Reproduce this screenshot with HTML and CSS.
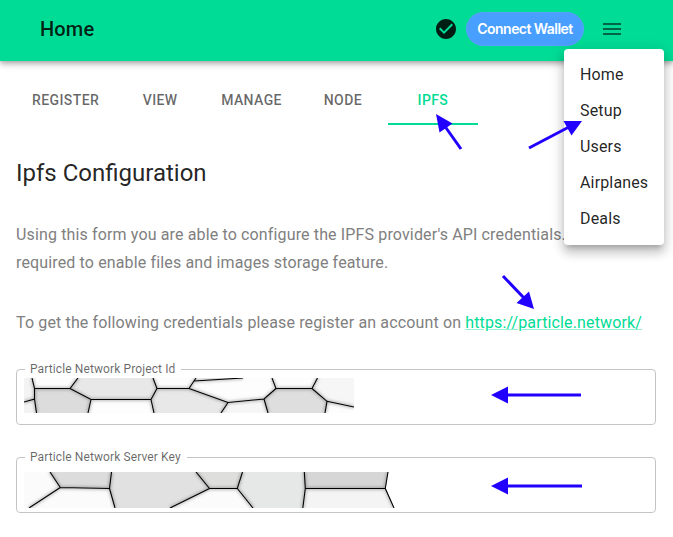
FILE: index.html
```html
<!DOCTYPE html>
<html lang="en">
<head>
<meta charset="utf-8">
<title>Ipfs Configuration</title>
<link rel="stylesheet" href="styles.css">
</head>
<body>
<header class="appbar">
  <h1 class="appbar-title">Home</h1>
  <svg class="icon check" viewBox="0 0 24 24"><path d="M12 2C6.480 2 2 6.480 2 12s4.480 10 10 10 10-4.480 10-10S17.520 2 12 2zm-2 15-5-5 1.410-1.410L10 14.170l7.590-7.590L19 8l-9 9z"/></svg>
  <button class="connect">Connect Wallet</button>
  <svg class="icon burger" viewBox="0 0 24 24"><path d="M3 18h18v-2H3v2zm0-5h18v-2H3v2zm0-7v2h18V6H3z"/></svg>
</header>
<nav class="menu">
  <a>Home</a><a>Setup</a><a>Users</a><a>Airplanes</a><a>Deals</a>
</nav>
<main class="page">
  <nav class="tabs">
    <a class="tab">Register</a><a class="tab">View</a><a class="tab">Manage</a><a class="tab">Node</a><a class="tab active">IPFS</a>
  </nav>
  <h2 class="title">Ipfs Configuration</h2>
  <p class="text">Using this form you are able to configure the IPFS provider's API credentials.<br>required to enable files and images storage feature.</p>
  <p class="text register">To get the following credentials please register an account on <a class="link">https://particle.network/</a></p>
  <div class="field">
    <span class="label">Particle Network Project Id</span>
    <svg class="mosaic" width="330" height="35" viewBox="24 378 330 35">
      <defs>
        <filter id="soft" x="-10%" y="-30%" width="120%" height="160%"><feGaussianBlur stdDeviation="1.6"/></filter>
        <path id="edges-a" d="M32 378L34.5 388.500H70L78 378M70 388.500L91 399.5H151L157 388.5L153 378M157 388.5H189L196 378M194 381L243 378M189 388.5L228 402.5L264 399L276 388.5L272 378M276 388.5H312L317.500 378M312 388.5L327 401.300L354 407M327 401.300L325 413M264 399L268 413M228 402.5L221 413M151 399.5L154 413M91 399.5L88 413M34.500 388V399L24 402M34.500 399L36.500 413"/>
      </defs>
      <path fill="#fdfdfd" d="M24 378h330v35H24z"/>
      <path fill="#f3f3f3" d="M24 378h8l2.500 10v11l2 14H24z"/>
      <path fill="#dcdcdc" d="M34.500 388H70l21 11.300L88 413H36.500l-2-14z"/>
      <path fill="#e8e8e8" d="M78 378h75l4 10.300-6 11H91L70 388zM157 388.300h32l39 14-7 10.700h-67l-3-13.700z"/>
      <path fill="#f6f6f6" d="M228 402.300l36-3.300 4 14h-47zM317.500 378H354v29l-27-5.700-15-13z"/>
      <path fill="#dedede" d="M276 388.300h36l15 13-2 11.700h-57l-4-14z"/>
      <use href="#edges-a" class="shade" filter="url(#soft)"/>
      <use href="#edges-a" class="edge"/>
    </svg>
  </div>
  <div class="field">
    <span class="label">Particle Network Server Key</span>
    <svg class="mosaic key" width="372" height="36" viewBox="24 472 372 36">
      <defs>
        <path id="edges-b" d="M50 472L60.300 487.500L109.500 488.500L111.500 472M60.300 487.500L29 508M109.500 488.500L115 508M196 472L209.500 488.500L170 508M209.500 488.500H237.300L242.500 472M237.300 488.500L253 508M304.300 472L305.300 488.500L302.800 508M305.300 488.500H385.300L388 472M385.300 488.500L394 508"/>
        <clipPath id="key-shape"><path d="M24 472h364l-2.200 16.300 8.700 19.700H24z"/></clipPath>
      </defs>
      <g clip-path="url(#key-shape)">
        <path fill="#fbfbfb" d="M24 472h372v36H24z"/>
        <path fill="#dcdcdc" d="M50 472h61.500l-2 16.300-49.200-1z"/>
        <path fill="#e1e1e1" d="M111.500 472H196l13.500 16.300L170 508h-55l-5.500-19.700z"/>
        <path fill="#dededc" d="M196 472h46.500l-5.200 16.300h-27.800z"/>
        <path fill="#e6e8e7" d="M242.500 472h61.800l1 16.300-2.500 19.700H253l-15.700-19.700z"/>
        <path fill="#d6d6d6" d="M304.300 472H388l-2.700 16.300h-80z"/>
        <path fill="#f4f4f4" d="M305.300 488.300h80L394 508h-91.200z"/>
        <use href="#edges-b" class="shade" filter="url(#soft)"/>
      </g>
      <use href="#edges-b" class="edge"/>
    </svg>
  </div>
</main>
<svg class="arrows" width="673" height="537" viewBox="0 0 673 537">
  <path class="shaft" d="M461 149L444 125M529 148L568 127.500M503 276L524 298M581 395H506M582 486H506"/>
  <path class="head" d="M436 114L452.500 123.500L439.500 132.500ZM582 121L563.500 121L571.500 135.500ZM534 309L516.500 303L529 291.500ZM491 395L508 386.500V403.500ZM491 486L508 477.500V494.500Z"/>
</svg>
</body>
</html>
```
FILE: styles.css
```css
* { box-sizing: border-box; }
body {
  margin: 0;
  background: #fff;
  color: rgba(0, 0, 0, .87);
  font-family: Roboto, "Liberation Sans", sans-serif;
  height: 537px;
  overflow: hidden;
  position: relative;
}
h1, h2, p { margin: 0; }
.appbar {
  position: relative;
  display: flex;
  align-items: center;
  height: 61px;
  padding: 0 49px 3px 40px;
  background: #00dc95;
  box-shadow: 0 2px 4px -1px rgba(0,0,0,.2), 0 4px 5px rgba(0,0,0,.14), 0 1px 10px rgba(0,0,0,.12);
}
.appbar-title {
  flex: 1;
  font-size: 20px;
  font-weight: 500;
  line-height: 32px;
  letter-spacing: .0075em;
}
.icon { width: 24px; height: 24px; flex: none; }
.check { fill: rgba(0,0,0,.87); margin-right: 8px; }
.burger { fill: rgba(0,0,0,.54); margin-left: 16px; }
.connect {
  width: 118px;
  height: 34px;
  padding: 0;
  border: 1px solid #5c9ffb;
  border-radius: 17px;
  background: #489fff;
  color: #fff;
  font: 600 14px/20px Inter, sans-serif;
  letter-spacing: -.55px;
  white-space: nowrap;
}
.menu {
  position: absolute;
  z-index: 2;
  top: 49px;
  right: 9px;
  width: 100px;
  padding: 8px 0;
  background: #fff;
  border-radius: 4px;
  box-shadow: 0 5px 5px -3px rgba(0,0,0,.2), 0 8px 10px 1px rgba(0,0,0,.14), 0 3px 14px 2px rgba(0,0,0,.12);
}
.menu a {
  display: block;
  padding: 6px 16px;
  font-size: 16px;
  line-height: 24px;
  letter-spacing: .00938em;
}
.page { padding: 16px 16px 0; }
.tabs { display: flex; height: 48px; }
.tab {
  display: flex;
  align-items: center;
  justify-content: center;
  min-width: 90px;
  padding: 0 16px;
  border-bottom: 2px solid transparent;
  color: rgba(0,0,0,.6);
  font-size: 14px;
  font-weight: 500;
  letter-spacing: .02857em;
  text-transform: uppercase;
}
.tab.active { color: #00dc95; border-color: #00dc95; }
.title {
  margin: 32px 0;
  font-size: 24px;
  font-weight: 400;
  line-height: 32px;
}
.text {
  color: #808080;
  font-size: 16px;
  line-height: 28px;
  letter-spacing: .14px;
  white-space: nowrap;
}
.register { margin: 32px 0; }
.link {
  color: #00dc95;
  text-decoration: underline;
  text-decoration-color: rgba(0,220,149,.4);
}
.field {
  position: relative;
  width: 640px;
  height: 56px;
  margin-bottom: 32px;
  padding: 8px 7px;
  border: 1px solid #c4c4c4;
  border-radius: 4px;
}
.label {
  position: absolute;
  top: -9px;
  left: 8px;
  padding: 0 6px 0 5px;
  background: #fff;
  color: rgba(0,0,0,.6);
  font-size: 12px;
  line-height: 17px;
  letter-spacing: .00938em;
}
.mosaic { display: block; }
.key { margin-top: 6px; }
.edge { fill: none; stroke: #000; stroke-width: 1.1; }
.shade { fill: none; stroke: rgba(0,0,0,.26); stroke-width: 3; }
.arrows { position: absolute; z-index: 3; top: 0; left: 0; pointer-events: none; }
.shaft { fill: none; stroke: #2200ff; stroke-width: 3; }
.head { fill: #2200ff; }
```
